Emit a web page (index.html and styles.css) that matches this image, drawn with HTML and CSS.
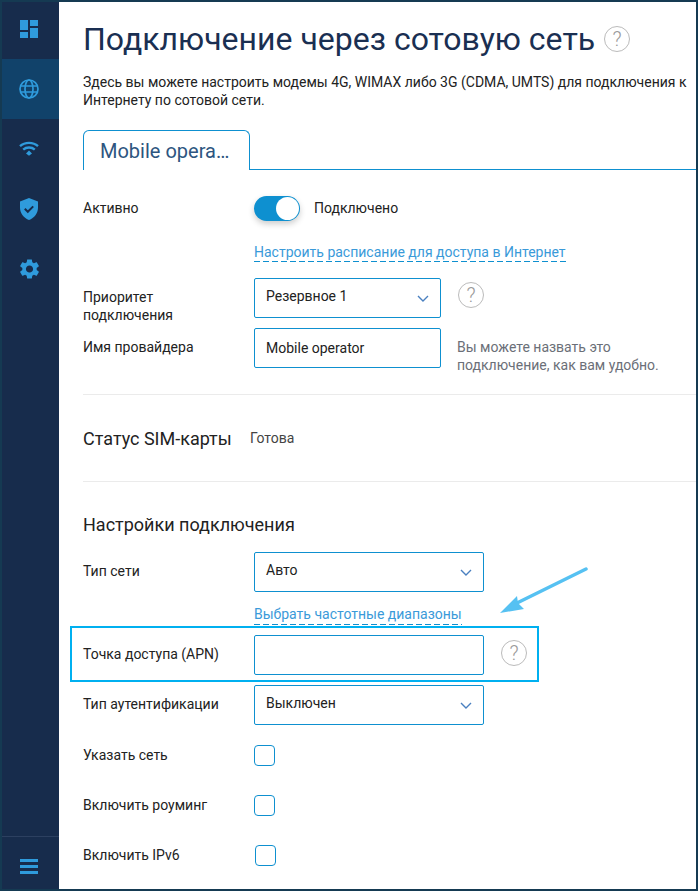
FILE: index.html
```html
<!DOCTYPE html>
<html lang="ru">

<head>
    <meta charset="UTF-8">
    <meta name="viewport" content="width=device-width, initial-scale=1.0">
    <title>Подключение через сотовую сеть</title>
    <link rel="stylesheet" href="styles.css">
</head>

<body>
    <div class="frame">
        <nav class="sidebar">
            <a class="nav-item">
                <svg class="nav-icon" viewBox="0 0 18 18"><path d="M0 0h8v10H0zM0 12h8v6H0zM10 0h8v6h-8zM10 8h8v10h-8z"/></svg>
            </a>
            <a class="nav-item active">
                <svg class="nav-icon globe" viewBox="0 0 20 20"><circle cx="10" cy="10" r="9"/><ellipse cx="10" cy="10" rx="4" ry="9"/><path d="M1.5 7h17M1.5 13h17"/></svg>
            </a>
            <a class="nav-item">
                <svg class="nav-icon wifi" viewBox="0 0 20 15"><path d="M1 5.2C5.8.8 14.2.8 19 5.2M4.2 8.6c3.2-2.8 8.4-2.8 11.6 0"/><path class="wifi-dot" d="M10 9.600l3 3-3 2.200-3-2.200z"/></svg>
            </a>
            <a class="nav-item">
                <svg class="nav-icon" viewBox="0 0 18 22"><path d="M9 0l9 3.400v6.400c0 5.600-3.800 10.400-9 12.200C3.800 20.200 0 15.400 0 9.800V3.400z"/><path class="shield-check" d="M4.800 10.800l3 3 5.400-5.400"/></svg>
            </a>
            <a class="nav-item">
                <svg class="nav-icon gear" viewBox="2.500 2 19 20"><path d="M19.140 12.940c.04-.3.06-.61.06-.94 0-.32-.02-.64-.07-.94l2.030-1.580c.18-.14.23-.41.12-.61l-1.920-3.320c-.12-.22-.37-.29-.59-.22l-2.390.96c-.5-.38-1.030-.7-1.620-.94l-.36-2.540c-.04-.24-.24-.41-.48-.41h-3.840c-.24 0-.43.17-.47.41l-.36 2.540c-.59.24-1.130.57-1.620.94l-2.390-.96c-.22-.08-.47 0-.59.22L2.740 8.870c-.12.21-.08.47.12.61l2.030 1.580c-.05.3-.09.63-.09.94s.02.64.07.94l-2.030 1.580c-.18.14-.23.41-.12.61l1.920 3.320c.12.22.37.29.59.22l2.390-.96c.5.38 1.030.7 1.620.94l.36 2.540c.05.24.24.41.48.41h3.840c.24 0 .44-.17.47-.41l.36-2.540c.59-.24 1.130-.56 1.620-.94l2.390.96c.22.08.47 0 .59-.22l1.920-3.320c.12-.22.07-.47-.12-.61l-2.010-1.580zM12 15.600c-1.980 0-3.600-1.620-3.600-3.600s1.620-3.600 3.600-3.600 3.600 1.620 3.600 3.600-1.620 3.600-3.600 3.600z"/></svg>
            </a>
            <div class="sidebar-bottom">
                <svg class="nav-icon burger" viewBox="0 0 18 15"><path d="M0 0h18v3H0zM0 6h18v3H0zM0 12h18v3H0z"/></svg>
            </div>
        </nav>

        <main class="content">
            <h1 class="page-title">Подключение через сотовую сеть <span class="help help-title">?</span></h1>
            <p class="page-desc">Здесь вы можете настроить модемы 4G, WIMAX либо 3G (CDMA, UMTS) для подключения к Интернету по сотовой сети.</p>

            <div class="tabs">
                <div class="tab">Mobile opera…</div>
            </div>

            <div class="row row-toggle">
                <div class="label">Активно</div>
                <span class="toggle"><span class="toggle-knob"></span></span>
                <span class="toggle-text">Подключено</span>
            </div>
            <div class="row row-link">
                <a class="dash-link">Настроить расписание для доступа в Интернет</a>
            </div>
            <div class="row row-field">
                <div class="label">Приоритет подключения</div>
                <div class="field">Резервное 1
                    <svg class="chevron" viewBox="0 0 12 7"><path d="M1 1l5 5 5-5"/></svg>
                </div>
                <span class="help help-row">?</span>
            </div>
            <div class="row row-field row-name">
                <div class="label">Имя провайдера</div>
                <div class="field field-text">Mobile operator</div>
                <div class="hint">Вы можете назвать это подключение, как вам удобно.</div>
            </div>

            <hr class="divider divider-first">

            <div class="sim-status">
                <h2 class="sim-title">Статус SIM-карты</h2>
                <span class="sim-value">Готова</span>
            </div>

            <hr class="divider divider-second">

            <h2 class="section-title">Настройки подключения</h2>

            <div class="row row-field row-net">
                <div class="label">Тип сети</div>
                <div class="field field-wide">Авто
                    <svg class="chevron" viewBox="0 0 12 7"><path d="M1 1l5 5 5-5"/></svg>
                </div>
            </div>
            <div class="row row-link row-link-bands">
                <a class="dash-link">Выбрать частотные диапазоны</a>
            </div>
            <div class="row row-field row-apn">
                <div class="label">Точка доступа (APN)</div>
                <input class="field field-wide" type="text">
                <span class="help help-apn">?</span>
                <div class="highlight"></div>
            </div>
            <div class="row row-field row-auth">
                <div class="label">Тип аутентификации</div>
                <div class="field field-wide">Выключен
                    <svg class="chevron" viewBox="0 0 12 7"><path d="M1 1l5 5 5-5"/></svg>
                </div>
            </div>
            <div class="row row-check">
                <div class="label">Указать сеть</div>
                <span class="checkbox"></span>
            </div>
            <div class="row row-check">
                <div class="label">Включить роуминг</div>
                <span class="checkbox"></span>
            </div>
            <div class="row row-check">
                <div class="label">Включить IPv6</div>
                <span class="checkbox checkbox-shift"></span>
            </div>

            <svg class="arrow" viewBox="0 0 90 50"><path class="arrow-line" d="M87 2L18 36"/><path class="arrow-head" d="M1 46L18 29l1 7 6 6z"/></svg>
        </main>
    </div>
</body>

</html>
```

FILE: styles.css
```css
* {
    box-sizing: border-box;
}

body {
    margin: 0;
    font-family: 'Roboto', Arial, sans-serif;
    font-size: 14px;
    color: #222;
    background: #fff;
}

.frame {
    display: flex;
    width: 698px;
    height: 891px;
    border: 2px solid #153a52;
    overflow: hidden;
}

.sidebar {
    flex: 0 0 57px;
    display: flex;
    flex-direction: column;
    background: #172c4c;
}

.nav-item {
    display: flex;
    align-items: center;
    justify-content: center;
    height: 60px;
    padding-right: 3px;
}

.nav-item:first-child {
    height: 57px;
    padding-bottom: 3px;
}

.nav-item.active {
    background: #11426a;
}

.nav-icon {
    width: 18px;
    fill: #2f9bdc;
}

.globe {
    width: 20px;
    fill: none;
    stroke: #2f9bdc;
    stroke-width: 1.7;
}

.wifi {
    width: 20px;
    margin-top: -2px;
    fill: none;
    stroke: #2f9bdc;
    stroke-width: 2.4;
}

.wifi-dot {
    fill: #2f9bdc;
    stroke: none;
}

.shield-check {
    fill: none;
    stroke: #172c4c;
    stroke-width: 2;
}

.gear {
    width: 19px;
}

.sidebar-bottom {
    margin-top: auto;
    height: 53px;
    border-top: 1px solid #2c4060;
    display: flex;
    align-items: flex-start;
    justify-content: center;
    padding: 22px 3px 0 0;
}

.content {
    position: relative;
    flex: 1;
    padding-left: 24px;
}

.page-title {
    display: flex;
    align-items: center;
    margin: 18px 0 0;
    height: 38px;
    font-size: 32px;
    font-weight: 400;
    color: #1a2f52;
    white-space: pre;
}

.page-desc {
    margin: 15px 0 0;
    width: 610px;
    line-height: 18px;
    color: #222;
}

.help {
    display: inline-flex;
    align-items: center;
    justify-content: center;
    width: 26px;
    height: 26px;
    border: 1.5px solid #bbb;
    border-radius: 50%;
    font-size: 20px;
    font-weight: 300;
    color: #999;
}

.help-title {
    margin-left: 1px;
}

.help-row {
    margin: 4px 0 0 17px;
}

.help-apn {
    margin: 5px 0 0 17px;
}

.tabs {
    margin-top: 21px;
    height: 40px;
    border-bottom: 1px solid #0e90d0;
}

.tab {
    width: 167px;
    height: 40px;
    padding-top: 8px;
    padding-left: 16px;
    background: #fff;
    border: 1px solid #0e90d0;
    border-bottom: none;
    border-radius: 6px 6px 0 0;
    font-size: 20px;
    color: #2d5580;
}

.row {
    display: flex;
    align-items: flex-start;
}

.label {
    flex: 0 0 171px;
    width: 171px;
    padding-right: 30px;
    line-height: 18px;
}

.row-toggle {
    margin-top: 26px;
    height: 25px;
    align-items: center;
}

.row-toggle .label,
.toggle-text {
    padding-bottom: 2px;
}

.toggle {
    position: relative;
    display: block;
    width: 46px;
    height: 25px;
    border-radius: 13px;
    background: #0e90d0;
    box-shadow: 0 3px 6px rgba(0, 0, 0, 0.2);
}

.toggle-knob {
    position: absolute;
    top: 1px;
    right: 1px;
    width: 23px;
    height: 23px;
    border-radius: 50%;
    background: #fff;
}

.toggle-text {
    margin-left: 14px;
}

.row-link {
    margin-top: 22px;
    padding-left: 171px;
    height: 20px;
}

.dash-link {
    display: block;
    height: 19px;
    line-height: 18px;
    color: #3a9ad9;
    background: repeating-linear-gradient(90deg, #0e90d0 0 6px, transparent 6px 9px) left bottom / 100% 1px no-repeat;
}

.row-field {
    margin-top: 10px;
    height: 40px;
}

.row-field .label {
    padding-top: 10px;
}

.row-link + .row-field {
    margin-top: 15px;
}

.field {
    position: relative;
    display: flex;
    align-items: center;
    width: 187px;
    height: 40px;
    padding: 0 11px 4px;
    background: #fff;
    border: 1px solid #0e90d0;
    border-radius: 2px;
    font: inherit;
    color: #222;
    outline: none;
}

.field-text {
    padding-bottom: 0;
}

.field-wide {
    width: 230px;
}

.chevron {
    position: absolute;
    right: 11px;
    top: 16px;
    width: 12px;
    height: 7px;
    fill: none;
    stroke: #4a80c0;
    stroke-width: 1.4;
}

.hint {
    margin: 10px 0 0 16px;
    width: 230px;
    line-height: 18px;
    color: #6b6f78;
}

.divider {
    margin: 0;
    border: none;
    border-top: 1px solid #ebebeb;
}

.divider-first {
    margin-top: 26px;
}

.sim-status {
    display: flex;
    align-items: center;
    height: 86px;
}

.sim-title {
    margin: 0;
    width: 167px;
    font-size: 18px;
    font-weight: 400;
    color: #222;
}

.sim-value {
    font-size: 14px;
    color: #444;
}

.section-title {
    margin: 33px 0 0;
    height: 20px;
    line-height: 20px;
    font-size: 18px;
    font-weight: 400;
    color: #222;
}

.row-field.row-net {
    margin-top: 17px;
}

.row-link-bands {
    margin-top: 13px;
    height: 20px;
}

.row-link-bands .dash-link {
    height: 20px;
    line-height: 19px;
}

.row-link + .row-field.row-apn {
    position: relative;
    margin-top: 10px;
}

.highlight {
    position: absolute;
    top: -9px;
    left: -13px;
    width: 469px;
    height: 56px;
    border: 2px solid #00b0f0;
    pointer-events: none;
}

.row-check {
    margin-top: 20px;
    height: 30px;
    align-items: center;
}

.row-auth + .row-check {
    margin-top: 15px;
}

.checkbox {
    display: block;
    width: 21px;
    height: 21px;
    border: 1px solid #0e90d0;
    border-radius: 4px;
}

.checkbox-shift {
    margin-left: 1px;
}

.arrow {
    position: absolute;
    left: 440px;
    top: 565px;
    width: 90px;
    height: 50px;
}

.arrow-line {
    fill: none;
    stroke: #56c1f2;
    stroke-width: 3.5;
    stroke-linecap: round;
}

.arrow-head {
    fill: #56c1f2;
}
```
